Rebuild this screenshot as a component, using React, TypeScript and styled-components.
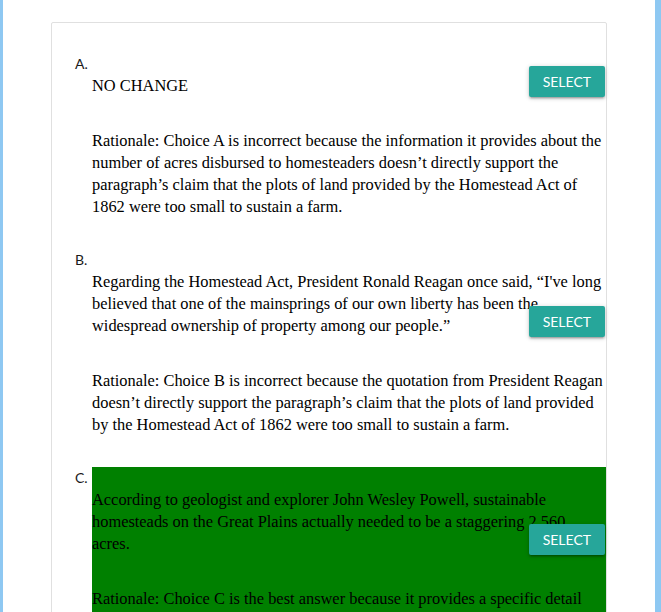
import React from 'react';
import styled, { createGlobalStyle } from 'styled-components';

const GlobalStyle = createGlobalStyle`
  html, body {
    margin: 0;
    padding: 0;
    background: #8ec8f2;
    height: 100%;
    overflow: hidden;
  }
  #root {
    height: 100%;
  }
`;

const Page = styled.div`
  margin: 0 6px 0 3px;
  height: 100%;
  background: #fff;
  padding-top: 22px;
  box-sizing: border-box;
`;

const Card = styled.div`
  margin-left: 48px;
  width: 556px;
  box-sizing: border-box;
  border: 1px solid #e0e0e0;
  border-radius: 2px;
  padding: 30px 0 0 23px;
  display: flex;
  flex-direction: column;
  gap: 31px;
`;

const Choice = styled.div`
  display: grid;
  grid-template-columns: 17px 1fr;
`;

const Letter = styled.div`
  font-family: Lato, 'Open Sans', sans-serif;
  font-size: 14px;
  line-height: 22px;
  color: #1a1a1a;
`;

const Body = styled.div<{ $correct?: boolean }>`
  background: ${(p) => (p.$correct ? '#008000' : 'transparent')};
  padding-top: 22px;
  font-family: 'Liberation Serif', serif;
  font-size: 16.4px;
  line-height: 22px;
  color: #000;
`;

const Answer = styled.div`
  position: relative;
  margin-right: 1px;
`;

const Rationale = styled.div`
  margin-top: 33px;
  margin-right: -3px;
`;

const SelectButton = styled.button`
  position: absolute;
  right: 0;
  bottom: 0;
  height: 31px;
  padding: 0 14px;
  border: none;
  border-radius: 2px;
  background: #26a69a;
  color: #fff;
  font-family: Lato, 'Open Sans', sans-serif;
  font-size: 14px;
  letter-spacing: 0;
  text-transform: uppercase;
  cursor: pointer;
  box-shadow: 0 2px 2px 0 rgba(0, 0, 0, 0.14), 0 3px 1px -2px rgba(0, 0, 0, 0.12),
    0 1px 5px 0 rgba(0, 0, 0, 0.2);
`;

const choices = [
  {
    letter: 'A.',
    answer: 'NO CHANGE',
    rationale:
      'Rationale: Choice A is incorrect because the information it provides about the number of acres disbursed to homesteaders doesn\u2019t directly support the paragraph\u2019s claim that the plots of land provided by the Homestead Act of 1862 were too small to sustain a farm.',
  },
  {
    letter: 'B.',
    answer:
      'Regarding the Homestead Act, President Ronald Reagan once said, \u201cI\'ve long believed that one of the mainsprings of our own liberty has been the widespread ownership of property among our people.\u201d',
    rationale:
      'Rationale: Choice B is incorrect because the quotation from President Reagan doesn\u2019t directly support the paragraph\u2019s claim that the plots of land provided by the Homestead Act of 1862 were too small to sustain a farm.',
  },
  {
    letter: 'C.',
    correct: true,
    answer:
      'According to geologist and explorer John Wesley Powell, sustainable homesteads on the Great Plains actually needed to be a staggering 2,560 acres.',
    rationale:
      'Rationale: Choice C is the best answer because it provides a specific detail that supports the paragraph\u2019s claim that the plots of land provided by the Homestead Act of 1862 were too small to sustain a farm.',
  },
];

export default function App() {
  return (
    <>
      <GlobalStyle />
      <Page>
        <Card>
          {choices.map((c) => (
            <Choice key={c.letter}>
              <Letter>{c.letter}</Letter>
              <Body $correct={c.correct}>
                <Answer>
                  {c.answer}
                  <SelectButton type="button">Select</SelectButton>
                </Answer>
                <Rationale>{c.rationale}</Rationale>
              </Body>
            </Choice>
          ))}
        </Card>
      </Page>
    </>
  );
}
